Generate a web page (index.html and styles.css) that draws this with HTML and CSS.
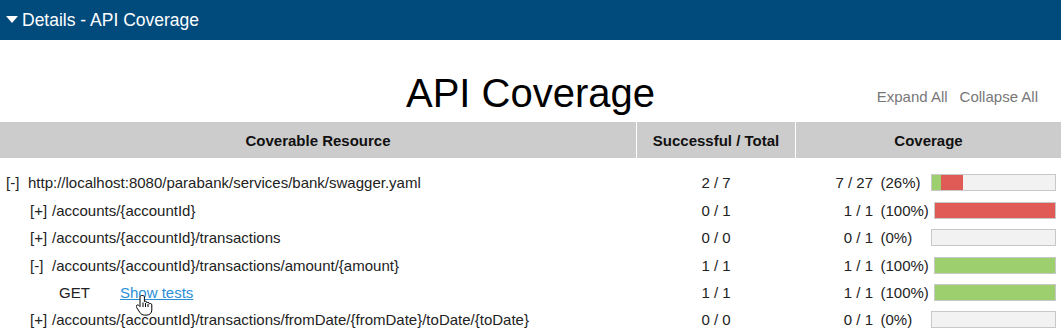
FILE: index.html
```html
<!DOCTYPE html>
<html lang="en">
<head>
    <meta charset="UTF-8">
    <title>Details - API Coverage</title>
    <link rel="stylesheet" href="styles.css">
</head>
<body>

<div class="details-bar">
    <span class="caret"></span>
    <span class="details-title">Details - API Coverage</span>
</div>

<div class="title-row">
    <div></div>
    <h1>API Coverage</h1>
    <div class="tree-links">
        <a href="#">Expand All</a>
        <a href="#">Collapse All</a>
    </div>
</div>

<div class="coverage">
    <div class="grid head">
        <div class="cell">Coverable Resource</div>
        <div class="cell">Successful / Total</div>
        <div class="cell">Coverage</div>
    </div>

    <div class="rows">
        <div class="grid row">
            <div class="res"><span class="toggle">[-]</span>http://localhost:8080/parabank/services/bank/swagger.yaml</div>
            <div class="num">2 / 7</div>
            <div class="cov">
                <span class="frac">7 / 27</span><span class="pct">(26%)</span>
                <div class="bar"><div class="ok" style="width: 7.4%"></div><div class="bad" style="width: 18.5%"></div></div>
            </div>
        </div>
        <div class="grid row">
            <div class="res lvl1"><span class="toggle">[+]</span>/accounts/{accountId}</div>
            <div class="num">0 / 1</div>
            <div class="cov">
                <span class="frac">1 / 1</span><span class="pct">(100%)</span>
                <div class="bar"><div class="bad" style="width: 100%"></div></div>
            </div>
        </div>
        <div class="grid row">
            <div class="res lvl1"><span class="toggle">[+]</span>/accounts/{accountId}/transactions</div>
            <div class="num">0 / 0</div>
            <div class="cov">
                <span class="frac">0 / 1</span><span class="pct">(0%)</span>
                <div class="bar"></div>
            </div>
        </div>
        <div class="grid row">
            <div class="res lvl1"><span class="toggle">[-]</span>/accounts/{accountId}/transactions/amount/{amount}</div>
            <div class="num">1 / 1</div>
            <div class="cov">
                <span class="frac">1 / 1</span><span class="pct">(100%)</span>
                <div class="bar"><div class="ok" style="width: 100%"></div></div>
            </div>
        </div>
        <div class="grid row">
            <div class="res lvl2">
                <span class="method">GET</span>
                <span class="link-wrap">
                    <a href="#" class="show-tests">Show tests</a>
                    <svg class="hand" width="18" height="24" viewBox="0 0 18 24">
                        <path d="M5.5 1.5c-.8 0-1.5.7-1.5 1.5v9.6l-1.2-1.2c-.6-.6-1.6-.6-2.2 0-.5.5-.5 1.3-.1 1.9l3.4 5.2c1 1.6 2.7 2.6 4.6 2.6h2.3c2.8 0 5-2.2 5-5v-5.2c0-.8-.6-1.4-1.4-1.4-.5 0-.9.2-1.1.6v-.4c0-.8-.6-1.4-1.4-1.4-.5 0-.9.2-1.1.6v-.3c0-.8-.6-1.4-1.4-1.4-.4 0-.8.2-1 .5V3c0-.8-.7-1.5-1.5-1.5z" fill="#fff" stroke="#000" stroke-width="1"/>
                        <path d="M7 8.5v4.5M9.5 9v4M12 10v3" stroke="#000" stroke-width="1" fill="none"/>
                    </svg>
                </span>
            </div>
            <div class="num">1 / 1</div>
            <div class="cov">
                <span class="frac">1 / 1</span><span class="pct">(100%)</span>
                <div class="bar"><div class="ok" style="width: 100%"></div></div>
            </div>
        </div>
        <div class="grid row">
            <div class="res lvl1"><span class="toggle">[+]</span>/accounts/{accountId}/transactions/fromDate/{fromDate}/toDate/{toDate}</div>
            <div class="num">0 / 0</div>
            <div class="cov">
                <span class="frac">0 / 1</span><span class="pct">(0%)</span>
                <div class="bar"></div>
            </div>
        </div>
    </div>
</div>

</body>
</html>
```

FILE: styles.css
```css
body {
    margin: 0;
    font-family: "Liberation Sans", Arial, sans-serif;
    font-size: 15px;
    color: #222;
    background: #fff;
    overflow: hidden;
}

/* collapsible section header */
.details-bar {
    height: 40px;
    background-color: #014a7c;
    color: #fff;
    display: flex;
    align-items: center;
    padding-left: 6px;
}

.caret {
    width: 0;
    height: 0;
    border-left: 6px solid transparent;
    border-right: 6px solid transparent;
    border-top: 7px solid #fff;
    margin-right: 4px;
    margin-top: -1px;
}

.details-title {
    font-size: 17.5px;
}

.title-row {
    display: grid;
    grid-template-columns: 1fr auto 1fr;
    align-items: end;
    margin-top: 30px;
    margin-bottom: 6px;
}

h1 {
    margin: 0;
    font-size: 40px;
    font-weight: normal;
    line-height: 46px;
    color: #000;
}

.tree-links {
    justify-self: end;
    display: flex;
    gap: 12px;
    padding-right: 23px;
    margin-bottom: 11px;
}

.tree-links a {
    color: #777;
    text-decoration: none;
}

/* table */
.grid {
    display: grid;
    grid-template-columns: 636px 158px 1fr;
    column-gap: 1px;
}

.head .cell {
    background-color: #cccccc;
    height: 36px;
    display: flex;
    align-items: center;
    justify-content: center;
    font-weight: bold;
    color: #111;
}

.rows {
    padding-top: 11.3px;
}

.row {
    height: 27.4px;
    align-items: center;
}

.res {
    padding-left: 6px;
    white-space: nowrap;
    display: flex;
    align-items: center;
}

.res.lvl1 {
    padding-left: 30px;
}

.res.lvl2 {
    padding-left: 59px;
}

.toggle {
    display: inline-block;
    width: 22px;
}

.method {
    display: inline-block;
    width: 61px;
}

.link-wrap {
    position: relative;
}

.show-tests {
    color: #2a8fd6;
    text-decoration: underline;
}

.hand {
    position: absolute;
    left: 16px;
    top: 10px;
}

.num {
    text-align: center;
}

.cov {
    display: flex;
    align-items: center;
    white-space: nowrap;
}

.frac {
    width: 77px;
    text-align: right;
}

.pct {
    min-width: 45px;
    margin-left: 7.5px;
}

.bar {
    flex: 1;
    height: 15px;
    margin-left: 5px;
    margin-right: 5px;
    border: 1px solid #c8c8c8;
    background-color: #f2f2f2;
    display: flex;
}

.bar .ok {
    background-color: #9dcf6e;
}

.bar .bad {
    background-color: #e05b56;
}
```
